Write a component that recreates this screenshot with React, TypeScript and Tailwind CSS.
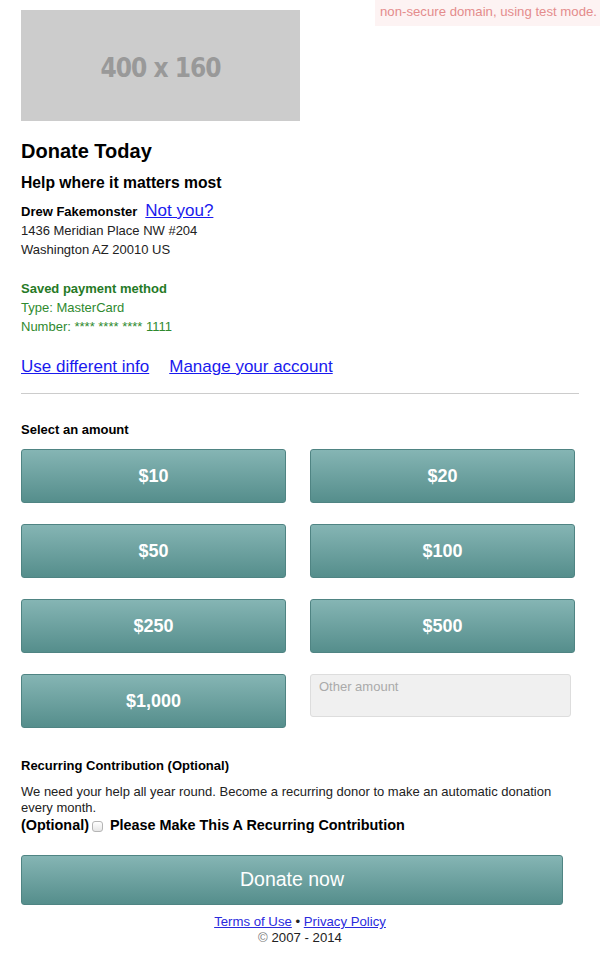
import React, { useState } from 'react';

const amounts = ['$10', '$20', '$50', '$100', '$250', '$500', '$1,000'];

const btn =
  'rounded-[3px] border border-[#4f8483] bg-gradient-to-b from-[#85b5b4] to-[#558e8c] text-white';

export default function App() {
  const [selected, setSelected] = useState<string | null>(null);
  const [recurring, setRecurring] = useState(false);

  return (
    <div className="relative min-h-[971px] bg-white pl-[21px] font-['Liberation_Sans',Arial,sans-serif] text-black">
      {/* test mode notice */}
      <div className="absolute right-0 top-0 h-[26px] w-[225px] bg-[#fdf3f3] pl-[5px] text-[13.2px] leading-[24px] text-[#e48c8c]">
        non-secure domain, using test mode.
      </div>

      <div className="pt-[10px]">
        <div className="flex h-[111px] w-[279px] items-center justify-center bg-[#cccccc] pt-[5px]">
          <span className="font-['DejaVu_Sans',sans-serif] text-[26px] font-bold tracking-[-1px] text-[#999999] [font-stretch:condensed]">
            400 x 160
          </span>
        </div>
      </div>

      <h1 className="mt-[18px] text-[20px] font-bold leading-[24px]">Donate Today</h1>
      <h2 className="mt-[10px] text-[15.7px] font-bold leading-[20px]">Help where it matters most</h2>

      <div className="mt-[8px] flex h-[20px] items-baseline gap-[8px] leading-[20px]">
        <span className="text-[13px] font-bold">Drew Fakemonster</span>
        <a href="#" className="text-[17px] text-[#1a1aee] underline">Not you?</a>
      </div>
      <div className="text-[13px] leading-[19px] text-[#222]">
        <div>1436 Meridian Place NW #204</div>
        <div>Washington AZ 20010 US</div>
      </div>

      <div className="mt-[20px] text-[13px] leading-[19px] text-[#2f8a2f]">
        <div className="font-bold text-[#267a26]">Saved payment method</div>
        <div>Type: MasterCard</div>
        <div>Number: **** **** **** 1111</div>
      </div>

      <div className="mt-[21px] flex gap-[20px] text-[17px] leading-[20px]">
        <a href="#" className="text-[#1a1aee] underline">Use different info</a>
        <a href="#" className="text-[#1a1aee] underline">Manage your account</a>
      </div>

      <hr className="mt-[16px] w-[558px] border-t border-[#cccccc]" />

      <div className="mt-[28px] text-[13px] font-bold leading-[16px]">Select an amount</div>

      <div className="mt-[11px] grid w-[554px] grid-cols-2 gap-x-[24px] gap-y-[21px]">
        {amounts.map(a => (
          <button
            key={a}
            onClick={() => setSelected(a)}
            className={`${btn} h-[54px] text-[18px] font-bold ${selected === a ? 'ring-2 ring-[#2d6b6a]' : ''}`}
          >
            {a}
          </button>
        ))}
        <input
          placeholder="Other amount"
          className="h-[43px] w-[261px] rounded-[3px] border border-[#dddddd] bg-[#f0f0f0] px-[8px] pb-[18px] text-[13px] text-[#555] placeholder:text-[#aaaaaa] focus:outline-none"
        />
      </div>

      <div className="mt-[30px] text-[13px] font-bold leading-[16px]">Recurring Contribution (Optional)</div>
      <p className="mt-[10px] w-[540px] text-[13px] leading-[16px] text-[#222]">
        We need your help all year round. Become a recurring donor to make an automatic donation every month.
      </p>
      <label className="flex items-center text-[14.4px] font-bold leading-[18px]">
        (Optional)
        <span
          onClick={() => setRecurring(!recurring)}
          className={`ml-[3px] mr-[7px] mt-[3px] inline-block h-[11px] w-[11px] rounded-[3px] border border-[#b5b5b5] ${recurring ? 'bg-[#558e8c]' : 'bg-gradient-to-b from-white to-[#e6e6e6]'}`}
        />
        Please Make This A Recurring Contribution
      </label>

      <button className={`${btn} mt-[21px] h-[50px] w-[542px] text-[19.5px]`}>Donate now</button>

      <div className="mt-[9px] -ml-[21px] text-center text-[13.2px] leading-[16px]">
        <div>
          <a href="#" className="text-[#2a2add] underline">Terms of Use</a>
          <span className="text-[#222]"> • </span>
          <a href="#" className="text-[#2a2add] underline">Privacy Policy</a>
        </div>
        <div className="text-[#222]">
          <span className="text-[#777]">©</span> 2007 - 2014
        </div>
      </div>
    </div>
  );
}
